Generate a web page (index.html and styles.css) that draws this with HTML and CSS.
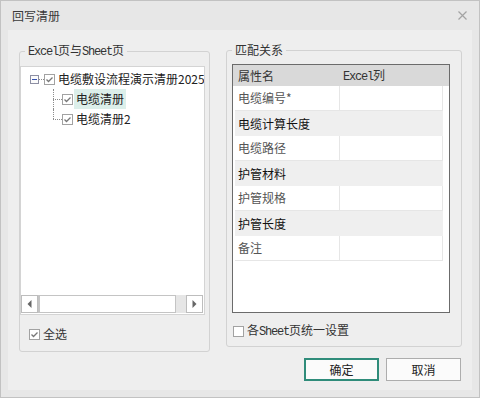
FILE: index.html
```html
<!DOCTYPE html>
<html lang="zh-CN">
<head>
    <meta charset="UTF-8">
    <title>回写清册</title>
    <link rel="stylesheet" href="styles.css">
</head>
<body>
    <div class="window">
        <div class="titlebar">
            <span class="title">回写清册</span>
            <svg class="close" width="9" height="9" viewBox="0 0 9 9"><path d="M0.5 0.5L8.5 8.5M8.5 0.5L0.5 8.5" stroke="#a3a3a3" stroke-width="1.2"/></svg>
        </div>

        <div class="panel">
            <div class="groups">
                <fieldset class="group group-sheets">
                    <legend><span class="lat">Excel</span>页与<span class="lat">Sheet</span>页</legend>
                    <div class="tree">
                        <div class="tree-rows">
                            <div class="node node-root">
                                <span class="toggle"></span>
                                <span class="joint"></span>
                                <svg class="cb" width="11" height="11" viewBox="0 0 11 11"><rect x="0.5" y="0.5" width="10" height="10" fill="#fff" stroke="#a2a2a2"/><path d="M2.5 5.5L4.5 7.5L8.5 3.5" fill="none" stroke="#777" stroke-width="1.3"/></svg>
                                <span class="label">电缆敷设流程演示清册20250101</span>
                            </div>
                            <div class="node node-child">
                                <span class="branch"></span>
                                <svg class="cb" width="11" height="11" viewBox="0 0 11 11"><rect x="0.5" y="0.5" width="10" height="10" fill="#fff" stroke="#a2a2a2"/><path d="M2.5 5.5L4.5 7.5L8.5 3.5" fill="none" stroke="#777" stroke-width="1.3"/></svg>
                                <span class="label selected">电缆清册</span>
                            </div>
                            <div class="node node-child last">
                                <span class="branch"></span>
                                <svg class="cb" width="11" height="11" viewBox="0 0 11 11"><rect x="0.5" y="0.5" width="10" height="10" fill="#fff" stroke="#a2a2a2"/><path d="M2.5 5.5L4.5 7.5L8.5 3.5" fill="none" stroke="#777" stroke-width="1.3"/></svg>
                                <span class="label">电缆清册2</span>
                            </div>
                        </div>
                        <div class="hscroll">
                            <span class="sb-btn"><svg width="5" height="8" viewBox="0 0 5 8"><path d="M4.5 0L0.5 4L4.5 8Z" fill="#666"/></svg></span>
                            <span class="sb-thumb"></span>
                            <span class="sb-track"></span>
                            <span class="sb-btn"><svg width="5" height="8" viewBox="0 0 5 8"><path d="M0.5 0L4.5 4L0.5 8Z" fill="#666"/></svg></span>
                        </div>
                    </div>
                    <label class="check-row check-all">
                        <svg class="cb" width="11" height="11" viewBox="0 0 11 11"><rect x="0.5" y="0.5" width="10" height="10" fill="#fff" stroke="#a2a2a2"/><path d="M2.5 5.5L4.5 7.5L8.5 3.5" fill="none" stroke="#777" stroke-width="1.3"/></svg>
                        <span>全选</span>
                    </label>
                </fieldset>

                <fieldset class="group group-map">
                    <legend>匹配关系</legend>
                    <div class="grid">
                        <div class="grid-head">
                            <span class="col-name">属性名</span>
                            <span class="col-excel"><span class="lat">Excel</span>列</span>
                        </div>
                        <div class="grid-body">
                            <div class="row"><span class="cell c1">电缆编号*</span><span class="cell c2"></span></div>
                            <div class="row row-group">电缆计算长度</div>
                            <div class="row"><span class="cell c1">电缆路径</span><span class="cell c2"></span></div>
                            <div class="row row-group">护管材料</div>
                            <div class="row"><span class="cell c1">护管规格</span><span class="cell c2"></span></div>
                            <div class="row row-group">护管长度</div>
                            <div class="row"><span class="cell c1">备注</span><span class="cell c2"></span></div>
                        </div>
                    </div>
                    <label class="check-row check-same">
                        <svg class="cb" width="11" height="11" viewBox="0 0 11 11"><rect x="0.5" y="0.5" width="10" height="10" fill="#fff" stroke="#a2a2a2"/></svg>
                        <span>各<span class="lat">Sheet</span>页统一设置</span>
                    </label>
                </fieldset>
            </div>

            <div class="actions">
                <button class="btn btn-primary">确定</button>
                <button class="btn">取消</button>
            </div>
        </div>
    </div>
</body>
</html>
```

FILE: styles.css
```css
* {
    box-sizing: border-box;
}

body {
    margin: 0;
    font-family: "Noto Sans CJK SC", "Noto Sans", sans-serif;
    font-size: 12px;
    color: #333;
}

.lat {
    font-family: "Liberation Mono", monospace;
    font-size: 12px;
    letter-spacing: -1.2px;
}

.window {
    width: 480px;
    height: 398px;
    border: 1px solid #c2c2c2;
    background: #e7e7e7;
    display: flex;
    flex-direction: column;
}

.titlebar {
    height: 29px;
    display: flex;
    align-items: center;
    justify-content: space-between;
    padding: 0 12px 0 11px;
    line-height: 16px;
}

.title {
    color: #3a3a3a;
}

.panel {
    flex: 1;
    margin: 0 7px 7px;
    background: #eeeeee;
    padding: 12px 10px 0 11px;
}

.groups {
    display: flex;
    justify-content: space-between;
    align-items: flex-start;
}

.group {
    margin: 0;
    padding: 0;
    border: 1px solid #d2d2d2;
    border-radius: 3px;
    min-width: 0;
}

.group legend {
    margin-left: 5px;
    padding: 0 3px;
    line-height: 16px;
    color: #333;
}

.group-sheets {
    width: 191px;
    padding-bottom: 9px;
}

.group-map {
    width: 236px;
    padding-bottom: 7px;
}

/* tree */
.tree {
    margin-top: 6px;
    width: 185px;
    height: 249px;
    border: 1px solid #d4d4d4;
    background: #fff;
    display: flex;
    flex-direction: column;
}

.tree-rows {
    flex: 1;
    padding-top: 2px;
    overflow: hidden;
}

.node {
    height: 20px;
    display: flex;
    align-items: center;
    white-space: nowrap;
    line-height: 20px;
    color: #222;
}

.node-root {
    padding-left: 9px;
}

.node-child {
    padding-left: 32px;
}

.toggle {
    flex: none;
    width: 9px;
    height: 9px;
    border: 1px solid #8d8fa3;
    background: #fbfbfb;
    position: relative;
}

.toggle::after {
    content: "";
    position: absolute;
    left: 1px;
    top: 3px;
    width: 5px;
    height: 1px;
    background: #3552b0;
}

.joint {
    flex: none;
    width: 5px;
    border-top: 1px dotted #8c8c8c;
}

.cb {
    flex: none;
    display: block;
}

.label {
    margin-left: 1px;
    padding: 0 2px;
}

.label.selected {
    background: #dcefea;
}

.branch {
    flex: none;
    align-self: stretch;
    width: 9px;
    position: relative;
}

.branch::before {
    content: "";
    position: absolute;
    left: 0;
    top: 0;
    bottom: 0;
    border-left: 1px dotted #8c8c8c;
}

.last .branch::before {
    bottom: 50%;
}

.branch::after {
    content: "";
    position: absolute;
    left: 0;
    right: 0;
    top: 50%;
    border-top: 1px dotted #8c8c8c;
}

.hscroll {
    height: 18px;
    margin: 0 1px 1px 0;
    display: flex;
}

.sb-btn {
    flex: none;
    width: 17px;
    border: 1px solid #bdbdbd;
    background: #fff;
    display: flex;
    align-items: center;
    justify-content: center;
}

.sb-thumb {
    flex: none;
    width: 138px;
    border: 1px solid #c4c4c4;
    border-left-width: 2px;
    background: #fff;
}

.sb-track {
    flex: 1;
    background: #e6e6e6;
}

.check-row {
    display: flex;
    align-items: center;
    gap: 3px;
    height: 16px;
    line-height: 16px;
    color: #333;
}

.check-all {
    margin-top: 11px;
    padding-left: 9px;
}

.check-same {
    margin-top: 10px;
    padding-left: 6px;
}

/* mapping grid */
.grid {
    margin: 6px 0 0 5px;
    width: 218px;
    height: 249px;
    border: 1px solid #6b6b6b;
    background: #fff;
}

.grid-head {
    height: 21px;
    display: flex;
    align-items: center;
    background: #d9d9d9;
    line-height: 16px;
    color: #333;
}

.col-name {
    width: 106px;
    padding-left: 5px;
}

.col-excel {
    padding-left: 4px;
}

.grid-body {
    padding-left: 2px;
}

.row {
    width: 208px;
    height: 25px;
    display: flex;
    align-items: center;
    line-height: 16px;
}

.cell {
    height: 100%;
    display: flex;
    align-items: center;
    background: #fff;
    border-right: 1px solid #e6e6e6;
    border-bottom: 1px solid #e6e6e6;
    color: #555;
}

.c1 {
    width: 105px;
    padding-left: 3px;
}

.c2 {
    width: 103px;
}

.row-group {
    background: #efefef;
    padding-left: 3px;
    color: #111;
}

/* buttons */
.actions {
    margin-top: 6px;
    padding-right: 1px;
    display: flex;
    justify-content: flex-end;
    gap: 7px;
}

.btn {
    width: 75px;
    height: 23px;
    border: 1px solid #adadad;
    background: #fbfbfb;
    font-family: "Noto Sans CJK SC", "Noto Sans", sans-serif;
    font-size: 12px;
    color: #222;
    padding: 0;
    line-height: 16px;
}

.btn-primary {
    border: 2px solid #2f8c7a;
}
```
